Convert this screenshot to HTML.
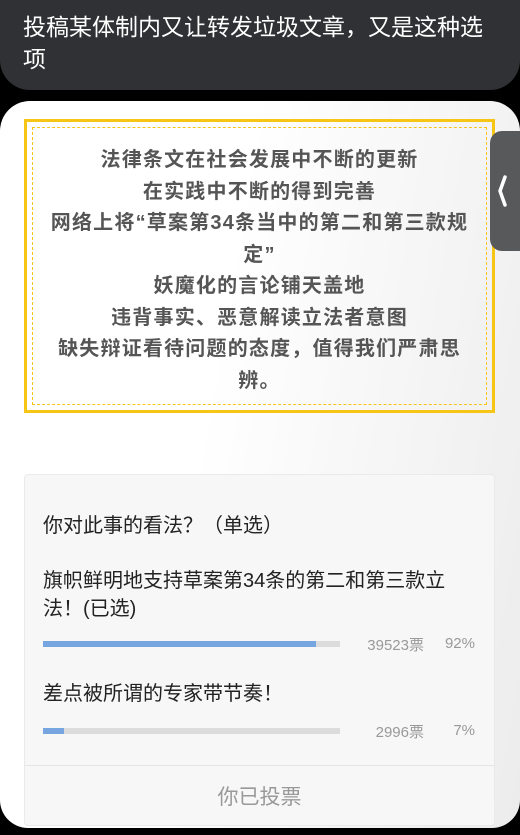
<!DOCTYPE html>
<html><head><meta charset="utf-8"><style>
*{margin:0;padding:0;box-sizing:border-box}
body{width:520px;height:835px;background:#000;overflow:hidden;position:relative;font-family:"Liberation Sans","Noto Sans CJK SC",sans-serif}
.top{position:absolute;left:0;top:0;width:520px;height:90px;background:#2f3134;border-radius:0 0 30px 30px;color:#fff;font-size:23px;line-height:32px;padding:11px 20px 0 23px}
.card{position:absolute;left:0;top:101px;width:520px;height:727px;background:linear-gradient(100deg,#fff 40%,#ececec 100%);border-radius:30px 30px 28px 28px;overflow:hidden}
.yb{position:absolute;left:24px;top:18px;width:471px;height:294px;border:3px solid #f6c515}
.yi{position:absolute;left:5px;top:5px;right:5px;bottom:5px;border:1px dashed #f6c515;text-align:center;font-weight:bold;color:#555;font-size:20px;line-height:31.5px;padding-top:17px;white-space:nowrap;letter-spacing:1.2px}
.tab{position:absolute;left:490px;top:131px;width:32px;height:120px;background:#58595b;border-radius:12px 0 0 12px}
.poll{position:absolute;left:24px;top:474px;width:471px;height:352px;background:#f7f7f7;border:1px solid #eaeaea;border-radius:4px}
.q{position:absolute;left:18px;top:34px;font-size:20px;color:#222}
.o{position:absolute;left:18px;font-size:20px;color:#222;line-height:28px;white-space:nowrap}
.bar{position:absolute;left:18px;width:297px;height:6px;background:#dcdcdc}
.bar i{display:block;height:6px;background:#76a5e0}
.n{position:absolute;font-size:15px;color:#999;text-align:right}
.div{position:absolute;left:0;right:0;top:290px;border-top:1px solid #e5e5e5}
.btn{position:absolute;left:0;right:0;top:306px;text-align:center;font-size:21px;color:#999}
</style></head><body>
<div class="top">投稿某体制内又让转发垃圾文章，又是这种选<br>项</div>
<div class="card">
<div class="yb"><div class="yi">法律条文在社会发展中不断的更新<br>在实践中不断的得到完善<br>网络上将“草案第34条当中的第二和第三款规<br>定”<br>妖魔化的言论铺天盖地<br>违背事实、恶意解读立法者意图<br>缺失辩证看待问题的态度，值得我们严肃思<br>辨。</div></div>
</div>
<div class="tab"><svg width="32" height="120"><path d="M15 46 L10 60 L15 74" stroke="#fff" stroke-width="3.5" fill="none" stroke-linecap="round"/></svg></div>
<div class="poll">
<div class="q">你对此事的看法？（单选）</div>
<div class="o" style="top:92px">旗帜鲜明地支持草案第34条的第二和第三款立<br>法！(已选)</div>
<div class="bar" style="top:166px"><i style="width:273px"></i></div>
<div class="n" style="right:70px;top:159px">39523票</div>
<div class="n" style="right:19px;top:160px">92%</div>
<div class="o" style="top:205px">差点被所谓的专家带节奏！</div>
<div class="bar" style="top:253px"><i style="width:21px"></i></div>
<div class="n" style="right:70px;top:246px">2996票</div>
<div class="n" style="right:19px;top:247px">7%</div>
<div class="div"></div>
<div class="btn">你已投票</div>
</div>
</body></html>
